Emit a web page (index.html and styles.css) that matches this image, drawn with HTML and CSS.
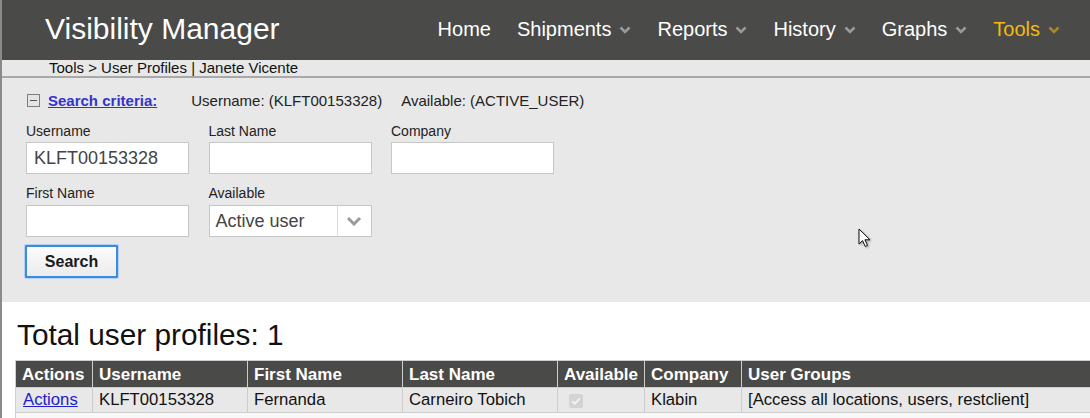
FILE: index.html
```html
<!DOCTYPE html>
<html>
<head>
<meta charset="utf-8">
<title>Visibility Manager</title>
<link rel="stylesheet" href="styles.css">
</head>
<body>
<header class="topbar">
  <div class="brand">Visibility Manager</div>
  <nav class="nav">
    <a class="nav-item">Home</a>
    <a class="nav-item">Shipments<svg class="chev" viewBox="0 0 12 8"><path d="M1.5 1.5 6 6l4.5-4.5"/></svg></a>
    <a class="nav-item">Reports<svg class="chev" viewBox="0 0 12 8"><path d="M1.5 1.5 6 6l4.5-4.5"/></svg></a>
    <a class="nav-item">History<svg class="chev" viewBox="0 0 12 8"><path d="M1.5 1.5 6 6l4.5-4.5"/></svg></a>
    <a class="nav-item">Graphs<svg class="chev" viewBox="0 0 12 8"><path d="M1.5 1.5 6 6l4.5-4.5"/></svg></a>
    <a class="nav-item active">Tools<svg class="chev" viewBox="0 0 12 8"><path d="M1.5 1.5 6 6l4.5-4.5"/></svg></a>
  </nav>
</header>
<div class="crumb">Tools &gt; User Profiles | Janete Vicente</div>

<section class="panel">
  <div class="criteria">
    <span class="toggle"></span>
    <a class="criteria-link">Search criteria:</a>
    <span class="criteria-val first">Username: (KLFT00153328)</span>
    <span class="criteria-val">Available: (ACTIVE_USER)</span>
  </div>
  <div class="form-grid">
    <label class="field">
      <span class="lbl">Username</span>
      <span class="input">KLFT00153328</span>
    </label>
    <label class="field">
      <span class="lbl">Last Name</span>
      <span class="input"></span>
    </label>
    <label class="field">
      <span class="lbl">Company</span>
      <span class="input"></span>
    </label>
    <label class="field row2">
      <span class="lbl">First Name</span>
      <span class="input"></span>
    </label>
    <label class="field row2">
      <span class="lbl">Available</span>
      <span class="select"><span class="select-val">Active user</span><span class="select-btn"><svg viewBox="0 0 16 10"><path d="M2 2l6 6 6-6"/></svg></span></span>
    </label>
  </div>
  <button class="btn">Search</button>
</section>

<section class="results">
  <h1 class="total">Total user profiles: 1</h1>
  <table class="grid">
    <thead>
      <tr>
        <th class="c-act">Actions</th>
        <th class="c-user">Username</th>
        <th class="c-first">First Name</th>
        <th class="c-last">Last Name</th>
        <th class="c-av">Available</th>
        <th class="c-co">Company</th>
        <th>User Groups</th>
      </tr>
    </thead>
    <tbody>
      <tr>
        <td><a class="link">Actions</a></td>
        <td>KLFT00153328</td>
        <td>Fernanda</td>
        <td>Carneiro Tobich</td>
        <td><span class="chk"><svg viewBox="0 0 14 14"><path d="M3.2 7.2l2.6 2.6 5-5.4"/></svg></span></td>
        <td>Klabin</td>
        <td>[Access all locations, users, restclient]</td>
      </tr>
      <tr class="filler"><td colspan="7"></td></tr>
    </tbody>
  </table>
</section>

<svg class="cursor" viewBox="0 0 13 20"><path d="M1 1v15l3.6-3.4 2.6 5.8 2.3-1-2.6-5.6H12z"/></svg>
</body>
</html>
```

FILE: styles.css
```css
* { box-sizing: border-box; }
html, body { height: 100%; }
body {
  margin: 0;
  border-left: 2px solid #8a8a8a;
  font-family: "Liberation Sans", Arial, sans-serif;
  color: #222;
  background: #fff;
  overflow: hidden;
  position: relative;
}

.topbar {
  height: 60px;
  background: #4a4a49;
  display: flex;
  align-items: center;
  justify-content: space-between;
  padding: 0 30px 0 43px;
}
.brand {
  color: #fff;
  font-size: 30px;
  line-height: 34px;
  margin-top: -2px;
}
.nav {
  display: flex;
  align-items: center;
  gap: 26px;
  margin-top: -2px;
}
.nav-item {
  color: #fff;
  font-size: 20px;
  line-height: 24px;
  display: flex;
  align-items: center;
}
.nav-item.active { color: #f5b90f; }
.chev {
  width: 12px;
  height: 8px;
  margin-left: 8px;
  margin-top: 2px;
  fill: none;
  stroke: #9a9a9a;
  stroke-width: 2.6;
}
.nav-item.active .chev { stroke: #a8862a; }

.crumb {
  height: 18px;
  background: #e8e8e8;
  border-bottom: 2px solid #a9a9a9;
  padding-left: 47px;
  font-size: 15px;
  line-height: 16px;
  color: #111;
}

.panel {
  background: #e8e8e8;
  padding: 14px 0 24px 23px;
}
.criteria {
  display: flex;
  align-items: center;
  height: 16px;
  font-size: 15px;
}
.toggle {
  width: 13px;
  height: 13px;
  border: 1px solid #7d7d7d;
  background: #e4e4e4;
  margin: 0 8px 0 2px;
  position: relative;
}
.toggle::after {
  content: "";
  position: absolute;
  left: 2px;
  right: 2px;
  top: 5px;
  height: 1px;
  background: #555;
}
.criteria-link {
  color: #3333cc;
  font-weight: bold;
  text-decoration: underline;
}
.criteria-val { margin-left: 19px; color: #222; }
.criteria-val.first { margin-left: 34px; }

.form-grid {
  display: grid;
  grid-template-columns: repeat(3, 163px);
  column-gap: 19.5px;
  row-gap: 11px;
  margin-top: 15px;
  padding-left: 1px;
}
.field { display: flex; flex-direction: column; }
.lbl {
  font-size: 14px;
  line-height: 16px;
  height: 16px;
  color: #222;
  margin-bottom: 3px;
}
.field.row2 .lbl { margin-bottom: 4px; }
.input {
  height: 32px;
  background: #fff;
  border: 1px solid #c6c6c6;
  font-size: 18px;
  line-height: 30px;
  padding-left: 7px;
  color: #444;
}
.select {
  height: 32px;
  background: #fff;
  border: 1px solid #c6c6c6;
  display: flex;
}
.select-val {
  flex: 1;
  font-size: 18px;
  line-height: 30px;
  padding-left: 6px;
  color: #444;
}
.select-btn {
  width: 34px;
  border-left: 1px solid #dcdcdc;
  display: flex;
  align-items: center;
  justify-content: center;
}
.select-btn svg {
  width: 16px;
  height: 10px;
  fill: none;
  stroke: #9b9b9b;
  stroke-width: 3;
}

.btn {
  margin-top: 8px;
  margin-left: 0;
  width: 93px;
  height: 33px;
  border: 2px solid #3d8be0;
  border-radius: 1px;
  box-shadow: 0 0 0 1px #b5d1f1;
  background: linear-gradient(#fbfbfb, #ececec);
  font-family: "Liberation Sans", Arial, sans-serif;
  font-weight: bold;
  font-size: 16px;
  color: #1a1a1a;
  padding: 0;
}

.results { padding: 16px 0 0 13px; }
.total {
  margin: 0 0 8px 2px;
  font-weight: normal;
  font-size: 29.8px;
  line-height: 34px;
  color: #111;
}
.grid {
  width: 1100px;
  border-collapse: collapse;
  table-layout: fixed;
  font-size: 16.7px;
}
.grid th, .grid td {
  border: 1px solid #cdcdcd;
  text-align: left;
  padding: 3px 6px;
  line-height: 18px;
  white-space: nowrap;
  overflow: hidden;
}
.grid th {
  background: #4a4a49;
  color: #fff;
  font-weight: bold;
  font-size: 17px;
  height: 27px;
  padding-top: 4px;
  padding-bottom: 2px;
}
.grid td {
  background: #e8e8e8;
  color: #111;
  height: 25px;
}
.c-act { width: 77px; }
.c-user { width: 155px; }
.c-first { width: 155px; }
.c-last { width: 155px; }
.c-av { width: 87px; }
.c-co { width: 97px; }
.link { color: #2020cc; text-decoration: underline; padding-left: 1px; }
.chk {
  display: block;
  width: 14px;
  height: 14px;
  margin: 1px 0 0 5px;
  background: #d3d3d3;
  border-radius: 2px;
}
.chk svg {
  width: 14px;
  height: 14px;
  fill: none;
  stroke: #f4f4f4;
  stroke-width: 1.8;
}
.grid tr.filler td {
  background: #f8f8f8;
  height: 12px;
  padding: 0;
}

.cursor {
  position: absolute;
  left: 856px;
  top: 228px;
  width: 13px;
  height: 20px;
  fill: #fff;
  stroke: #111;
  stroke-width: 1;
  filter: drop-shadow(1px 1px 1px rgba(0,0,0,0.35));
}
```
